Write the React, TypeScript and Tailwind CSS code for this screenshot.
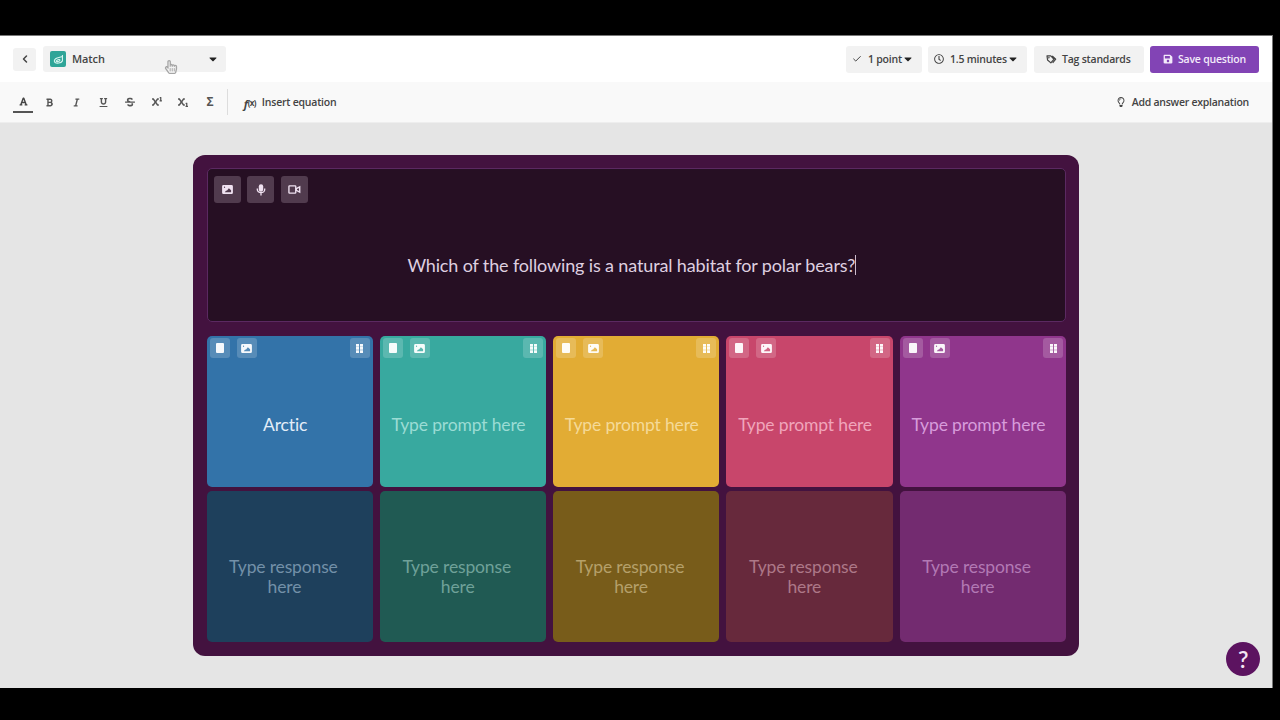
import type { ReactNode } from 'react'
import { Check, ChevronLeft } from 'lucide-react'
import {
  FaBold,
  FaCaretDown,
  FaFont,
  FaItalic,
  FaRegClock,
  FaRegHandPointer,
  FaRegLightbulb,
  FaSave,
  FaStrikethrough,
  FaSubscript,
  FaSuperscript,
  FaUnderline,
} from 'react-icons/fa'

const tiles = [
  { prompt: 'Arctic', top: 'bg-[#3373a9]', bottom: 'bg-[#1e405c]', hint: 'text-[#7390a8]', text: 'text-[#e3edf8]' },
  { prompt: '', top: 'bg-[#38a99f]', bottom: 'bg-[#205a53]', hint: 'text-[#6fa199]', text: 'text-[#9bdcd4]' },
  { prompt: '', top: 'bg-[#e2ac34]', bottom: 'bg-[#785c1a]', hint: 'text-[#b5a06a]', text: 'text-[#f5da98]' },
  { prompt: '', top: 'bg-[#c8466b]', bottom: 'bg-[#67293c]', hint: 'text-[#ad7888]', text: 'text-[#f0a5bb]' },
  { prompt: '', top: 'bg-[#90368c]', bottom: 'bg-[#732b70]', hint: 'text-[#b279b4]', text: 'text-[#d79cdb]' },
]

const formats = [
  { name: 'Bold', icon: <FaBold size={9} /> },
  { name: 'Italic', icon: <FaItalic size={9} /> },
  { name: 'Underline', icon: <FaUnderline size={9} /> },
  { name: 'Strikethrough', icon: <FaStrikethrough size={10} /> },
  { name: 'Superscript', icon: <FaSuperscript size={10} /> },
  { name: 'Subscript', icon: <FaSubscript size={10} /> },
  { name: 'Symbols', icon: <span className="text-[12px] font-bold leading-none">Σ</span> },
]

function ImageIcon({ className }: { className?: string }) {
  return (
    <svg viewBox="0 0 12 10" className={className} fill="currentColor" fillRule="evenodd">
      <path d="M1.5 0h9A1.5 1.5 0 0 1 12 1.5v7a1.5 1.5 0 0 1-1.5 1.5h-9A1.5 1.5 0 0 1 0 8.5v-7A1.5 1.5 0 0 1 1.5 0ZM3 8h7V5.8L7.5 3.6 5.3 6.5 4.5 6.2ZM2.7 1.8a.7.7 0 1 0 0 1.4.7.7 0 0 0 0-1.4Z" />
    </svg>
  )
}

function MicIcon() {
  return (
    <svg viewBox="0 0 10 12" className="h-[12px] w-[10px]" fill="none" stroke="currentColor" strokeWidth="1.3">
      <rect x="2.8" y="0.3" width="4.4" height="7.4" rx="2.2" fill="currentColor" stroke="none" />
      <path d="M1.3 4.6v.8a3.7 3.2 0 0 0 7.4 0v-.8M5 8.5v3" />
    </svg>
  )
}

function VideoIcon() {
  return (
    <svg viewBox="0 0 14 10" className="h-[9px] w-[13px]" fill="none" stroke="currentColor" strokeWidth="1.5">
      <rect x="0.8" y="0.9" width="7.6" height="8.2" rx="0.8" />
      <path d="M9 4 12.8 2v6L9 6Z" />
    </svg>
  )
}

function GripIcon() {
  return (
    <svg viewBox="0 0 7 9" className="h-[9px] w-[7px]" fill="currentColor">
      <path d="M0 0h3v2.7H0ZM4 0h3v2.7H4ZM0 3.1h3v2.7H0ZM4 3.1h3v2.7H4ZM0 6.2h3V9H0ZM4 6.2h3V9H4Z" />
    </svg>
  )
}

function TagIcon() {
  return (
    <svg viewBox="0 0 12 10" className="h-[9px] w-[11px]" fill="none" stroke="currentColor" strokeWidth="1.3" strokeLinejoin="round">
      <path d="M1 1h4.2l3.6 3.7-3.5 4L1.6 5.5ZM6.8 1l3.900 3.700-3.400 4" />
      <circle cx="3" cy="2.9" r="0.3" />
    </svg>
  )
}

function MatchLogo() {
  return (
    <span className="flex h-4 w-4 items-center justify-center rounded-[2px] bg-[#2fa598] text-[#d5f5ef]">
      <svg viewBox="0 0 12 12" className="h-[11px] w-[11px]" fill="none" stroke="currentColor" strokeWidth="1.2" strokeLinejoin="round">
        <path d="M10.3 1v6.5c-1.5 2.7-6.5 3.2-8.5 1.3C.8 7 2 5.2 4.5 4.3l5.8-1.5" />
        <path d="M3.3 7.8c1 1 3.8.5 4.200-.8S5.500 5.400 3.300 7.800Z" />
      </svg>
    </span>
  )
}

function TileButton({ children }: { children: ReactNode }) {
  return (
    <button className="flex h-5 w-5 items-center justify-center rounded-[3px] bg-white/18 text-white/95">
      {children}
    </button>
  )
}

function MediaButton({ children }: { children: ReactNode }) {
  return (
    <button className="flex h-[27px] w-[27px] items-center justify-center rounded-[3px] bg-[#513b4e] text-[#f0e2f1]">
      {children}
    </button>
  )
}

export default function App() {
  return (
    <div className="h-[720px] w-[1280px] overflow-hidden bg-black pt-[35px] font-['Open_Sans',sans-serif] text-[11px] font-semibold tracking-[-0.22px] text-[#444]">
      <div className="relative flex h-[653px] w-[1273px] flex-col border-t border-r border-[#777] bg-[#e5e5e5]">
        <header className="flex h-[46px] shrink-0 items-center bg-white px-[13px]">
          <button className="flex h-[23px] w-[23px] items-center justify-center rounded-[3px] bg-[#f2f2f2]">
            <ChevronLeft size={12} strokeWidth={3} />
          </button>
          <button className="relative ml-[7px] flex h-[26px] w-[183px] items-center rounded-[3px] bg-[#f2f2f2] px-[7px]">
            <MatchLogo />
            <span className="ml-[6px] tracking-[-0.1px]">Match</span>
            <FaCaretDown size={12} className="ml-auto text-[#222]" />
            <FaRegHandPointer size={14} className="absolute top-[14px] left-[121px] text-[#a5a5a5]" />
          </button>

          <div className="ml-auto flex h-[27px] text-[10.5px]">
            <button className="flex w-[76px] items-center rounded-[3px] bg-[#f2f2f2] pl-[6px] whitespace-nowrap">
              <Check size={10} strokeWidth={2.4} />
              <span className="ml-[6px] pt-px">1 point</span>
              <FaCaretDown size={12} className="text-[#222]" />
            </button>
            <button className="ml-[6px] flex w-[99px] items-center rounded-[3px] bg-[#f2f2f2] pl-[6px] whitespace-nowrap">
              <FaRegClock size={10} />
              <span className="ml-[6px] pt-px">1.5 minutes</span>
              <FaCaretDown size={12} className="text-[#222]" />
            </button>
            <button className="ml-[7px] flex w-[110px] items-center rounded-[3px] bg-[#f2f2f2] pl-[12px] whitespace-nowrap">
              <TagIcon />
              <span className="ml-[5px] pt-px">Tag standards</span>
            </button>
            <button className="ml-[6px] flex w-[109px] items-center rounded-[3px] bg-[#8244b5] pl-[13px] whitespace-nowrap text-[#f3eafa]">
              <FaSave size={10} />
              <span className="ml-[5px] pt-px">Save question</span>
            </button>
          </div>
        </header>

        <div className="flex h-[41px] shrink-0 items-center border-b border-[#eee] bg-[#f9f9f9] pr-[23px] pl-[13px] text-[10.5px]">
          <button className="flex h-[22px] w-5 items-center justify-center border-b-2 border-[#555]">
            <FaFont size={9} />
          </button>
          <div className="ml-[3.5px] flex">
            {formats.map(({ name, icon }) => (
              <button key={name} aria-label={name} className="flex w-[26.7px] items-center justify-center text-[#555]">
                {icon}
              </button>
            ))}
          </div>
          <div className="ml-[3.5px] h-[26px] w-px bg-[#ddd]" />
          <button className="ml-[16px] flex items-center pt-[2px]">
            <span className="flex w-[18px] items-center font-bold">
              <i className="text-[11px] leading-none">f</i>
              <span className="text-[8px] leading-none tracking-[-0.6px]">(x)</span>
            </span>
            <span>Insert equation</span>
          </button>
          <button className="ml-auto flex items-center">
            <FaRegLightbulb size={10} />
            <span className="ml-[6px] pt-[2px] tracking-[-0.25px]">Add answer explanation</span>
          </button>
        </div>

        <main className="mt-[32px] ml-[193px] h-[501px] w-[886px] shrink-0 rounded-[12px] bg-[#43123f] pt-[13px] pr-[13px] pl-[13.5px] font-[Lato,sans-serif] text-[17.5px] font-normal tracking-[-0.15px] [font-variant-ligatures:none]">
          <section className="flex h-[154px] flex-col rounded-[5px] border border-[#5b2961] bg-[#260f23] px-[6px] pt-[7px]">
            <div className="flex gap-[6.5px]">
              <MediaButton><ImageIcon className="h-[9px] w-[11px]" /></MediaButton>
              <MediaButton><MicIcon /></MediaButton>
              <MediaButton><VideoIcon /></MediaButton>
            </div>
            <p className="mt-[51px] flex items-center justify-center pr-[9px] text-[18px] leading-[22px] tracking-[-0.14px] whitespace-nowrap text-[#dfcfe0]">
              Which of the following is a natural habitat for polar bears?
              <span className="h-[20px] w-px bg-[#cdbccd]" />
            </p>
          </section>

          <section className="mt-[14px] grid grid-cols-5 gap-x-[7px]">
            {tiles.map(({ prompt, top, bottom, hint, text }) => (
              <div key={top} className="flex flex-col gap-[4px] text-center leading-[20px]">
                <div className={`flex h-[151px] flex-col rounded-[5px] px-[3px] pt-[3px] ${top}`}>
                  <div className="-mt-px flex">
                    <TileButton><span className="h-[10px] w-[8px] rounded-[1px] bg-current" /></TileButton>
                    <span className="w-[7px]" />
                    <TileButton><ImageIcon className="h-[9px] w-[11px]" /></TileButton>
                    <span className="flex-1" />
                    <TileButton><GripIcon /></TileButton>
                  </div>
                  <p className={`mt-[57px] pr-[9px] whitespace-nowrap ${text}`}>
                    {prompt || 'Type prompt here'}
                  </p>
                </div>
                <div className={`h-[151px] rounded-[5px] pt-[66px] pr-[12.5px] ${bottom} ${hint}`}>
                  Type response
                  <br />
                  <span className="pl-[2px]">here</span>
                </div>
              </div>
            ))}
          </section>
        </main>

        <button className="absolute right-[12px] bottom-[12px] flex h-[34px] w-[34px] items-center justify-center rounded-full bg-[#5c1360] font-[Lato,sans-serif] text-[23px] font-semibold text-[#f3e6f4]">
          ?
        </button>
      </div>
    </div>
  )
}
